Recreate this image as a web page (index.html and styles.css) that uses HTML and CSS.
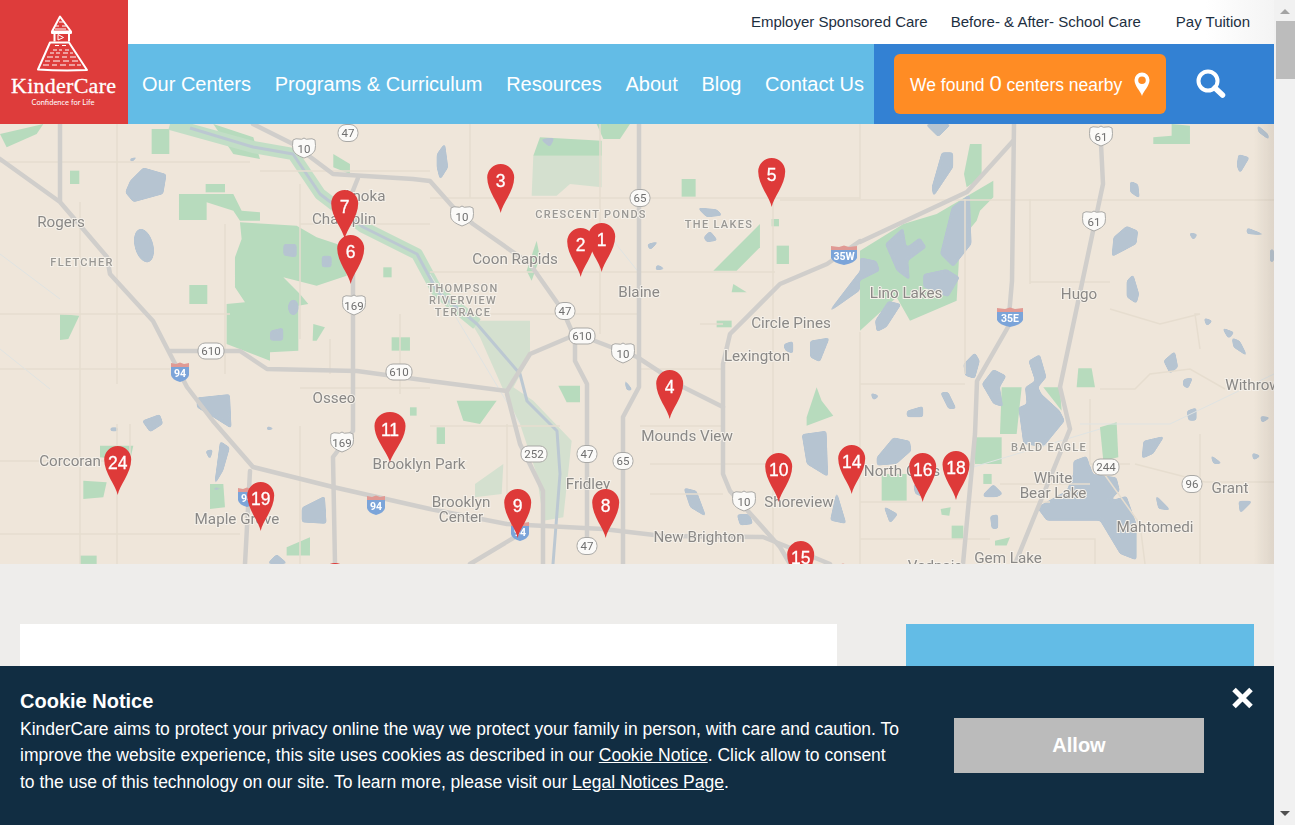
FILE: index.html
```html
<!DOCTYPE html>
<html lang="en">

<head>
    <meta charset="UTF-8">
    <meta name="viewport" content="width=device-width, initial-scale=1.0">
    <title>KinderCare Centers</title>
    <link rel="stylesheet" href="styles.css">
</head>

<body>
    <div class="page">
        <header class="site-header">
            <a class="logo" href="#">
                <svg width="128" height="124" viewBox="0 0 128 124">
                    <g class="logo-lines">
                        <path d="M60 16.500 L52 31.500 L71 31.500 Z" />
                        <path d="M52 31.500 V33 H71 V31.500 M54.500 33 V41.500 M69 33 V41.500" />
                        <path d="M50 42.500 H69 L87 70 Q62 71 38 69.500 Z" />
                        <path class="logo-thin" d="M56 26 H59 M62 26 H66 M59 22 H63 M55 29 H66 M55 45.500 H59 M62 45.500 H66 M53 50 H57 M59 50 H62 M65 50 H69 M50 53 H54 M56 53 H60 M63 53 H68 M70 53 H73 M47 57 H53 M55 57 H59 M62 57 H67 M70 57 H76 M45 61 H50 M53 61 H60 M63 61 H69 M72 61 H78 M43 65 H49 M52 65 H57 M60 65 H66 M69 65 H75 M77 65 H81" />
                        <path class="logo-thin" d="M58 34.500 V40 L63.500 37.500 Z" />
                    </g>
                    <text class="logo-name" x="63.500" y="93" textLength="105">KinderCare</text>
                    <text class="logo-tag" x="63" y="104.500" textLength="63">Confidence for Life</text>
                </svg>
            </a>
            <div class="header-main">
                <div class="top-links">
                    <a href="#">Employer Sponsored Care</a>
                    <a href="#">Before- &amp; After- School Care</a>
                    <a class="pay-link" href="#">Pay Tuition</a>
                </div>
                <div class="nav-row">
                    <nav class="main-nav">
                        <a href="#">Our Centers</a>
                        <a href="#">Programs &amp; Curriculum</a>
                        <a href="#">Resources</a>
                        <a href="#">About</a>
                        <a href="#">Blog</a>
                        <a href="#">Contact Us</a>
                    </nav>
                    <div class="nav-tools">
                        <a class="found-btn" href="#">
                            <span>We found <b>0</b> centers nearby</span>
                            <svg width="16" height="24" viewBox="0 0 16 24">
                                <path fill="#fff" fill-rule="evenodd" d="M8 24 C6.500 19 0.500 14 0.500 8 A7.500 7.500 0 0 1 15.500 8 C15.500 14 9.500 19 8 24 Z M8 4.500 A3.800 3.800 0 1 0 8 12.100 A3.800 3.800 0 0 0 8 4.500 Z" />
                            </svg>
                        </a>
                        <a class="search-btn" href="#">
                            <svg width="30" height="30" viewBox="0 0 30 30">
                                <circle cx="12" cy="12" r="9.500" fill="none" stroke="#fff" stroke-width="4" />
                                <path d="M19 19 L26.500 26" stroke="#fff" stroke-width="5.500" stroke-linecap="round" />
                            </svg>
                        </a>
                    </div>
                </div>
            </div>
        </header>

        <div class="map">
            <svg width="1274" height="440" viewBox="0 0 1274 440">
                <defs>
                    <path id="pin" d="M0 0 C-1.500 -9 -13.500 -22 -13.500 -35.500 A13.500 13.500 0 1 1 13.500 -35.500 C13.500 -22 1.500 -9 0 0 Z" />
                    <rect id="route2" x="-10" y="-8.500" width="20" height="17" rx="8" />
                    <rect id="route3" x="-13" y="-8" width="26" height="16" rx="7" />
                    <path id="us" d="M-11 -8 Q-8 -10 -5 -9 Q-2 -8 0 -10 Q2 -8 5 -9 Q8 -10 11 -8 Q12 -2 11 2 Q9 7 0 10 Q-9 7 -11 2 Q-12 -2 -11 -8 Z" />
                    <filter id="soft" x="-5%" y="-5%" width="110%" height="110%">
                        <feGaussianBlur stdDeviation="4" />
                        <feComponentTransfer>
                            <feFuncA type="linear" slope="6" intercept="-2.500" />
                        </feComponentTransfer>
                    </filter>
                </defs>

                <g class="map-base">
                    <g class="parks-pale" transform="translate(430) scale(.3333)">
                        <polygon points="120,590 300,590 300,700 250,790 310,830 425,950 400,1180 340,1190 320,1050 270,900 230,820 150,640" />
                        <polygon points="310,95 515,95 515,190 420,180 380,215 305,215" />
                        <polygon points="135,1080 220,1020 215,1110 135,1120" />
                    </g>
                    <g class="parks" transform="scale(.3333)">
                        <polygon points="720,295 890,305 950,340 1040,370 1040,455 950,485 850,460 900,510 925,540 895,545 895,680 810,685 810,710 680,660 680,540 735,535 705,490 705,400 725,345" />
                        <polygon points="537,210 700,210 725,260 780,265 780,290 720,290 700,260 620,235 620,288 537,288" />
                        <polygon points="617,180 675,180 675,205 617,205" />
                        <polygon points="455,15 508,15 508,90 455,90" />
                        <polygon points="568,483 622,483 622,540 568,540" />
                        <polygon points="210,140 238,140 238,180 210,180" />
                        <polygon points="180,570 238,575 205,645 180,648" />
                        <polygon points="940,600 975,610 950,650 938,650" />
                        <polygon points="1175,640 1230,640 1230,680 1175,680" />
                        <polygon points="1150,430 1175,430 1175,460 1150,460" />
                        <polygon points="250,1070 320,1075 310,1120 250,1125" />
                        <polygon points="300,965 400,965 390,1010 300,1000" />
                        <polygon points="630,1080 670,1080 675,1150 630,1155" />
                        <polygon points="240,1295 290,1295 290,1320 240,1320" />
                        <polygon points="1230,850 1250,850 1250,875 1230,875" />
                        <polygon points="0,30 130,0 110,30 20,70" />
                        <polygon points="640,0 760,40 780,105 700,90" />
                        <polygon points="1000,90 1050,120 1050,150 1000,130" />
                        <polygon points="860,1270 930,1240 930,1295 860,1295" />
                    </g>
                    <g class="parks" transform="translate(430) scale(.3333)">
                        <polygon points="330,40 515,50 515,95 310,95" />
                        <polygon points="755,165 797,165 797,218 755,218" />
                        <polygon points="1040,365 1077,365 1077,420 1040,420" />
                        <polygon points="1025,285 1047,285 1047,307 1025,307" />
                        <polygon points="850,440 990,300 990,370 920,440" />
                        <polygon points="1130,880 1160,790 1175,830 1210,875 1130,905" />
                        <polygon points="385,785 450,785 450,835 410,835" />
                        <polygon points="20,910 45,910 45,960 20,960" />
                        <polygon points="80,830 200,830 150,900 100,890" />
                        <polygon points="500,0 600,0 570,45 520,45" />
                        <polygon points="860,590 905,590 905,610 860,610" />
                        <polygon points="910,480 950,505 905,505" />
                        <polygon points="290,440 320,350 330,400 305,470" />
                    </g>
                    <g class="parks" transform="translate(860) scale(.3333)">
                        <polygon points="330,60 365,60 365,160 320,190 312,150" />
                        <polygon points="880,40 935,35 935,0 990,5 990,60 880,60" />
                        <polygon points="0,380 130,300 230,270 400,170 400,220 360,260 350,290 300,350 290,530 150,590 110,520 0,620" />
                        <polygon points="345,940 425,940 425,1020 345,1020" />
                        <polygon points="655,733 695,733 705,790 650,790" />
                        <polygon points="425,790 485,790 470,930 420,930" />
                        <polygon points="550,790 600,790 605,860" />
                        <polygon points="720,910 770,895 775,1000 730,1010" />
                        <polygon points="65,1050 140,1050 140,1130 65,1130" />
                        <polygon points="275,1205 310,1205 310,1245 275,1245" />
                        <polygon points="242,1155 272,1150 268,1175 245,1172" />
                        <polygon points="405,1250 450,1240 440,1265 405,1265" />
                        <polygon points="370,1050 395,1050 395,1080 370,1080" />
                    </g>

                    <g filter="url(#soft)" transform="scale(.3333)">
                        <g class="lakes">
                            <polygon points="390,170 430,130 500,150 490,210 400,235 375,205" />
                            <ellipse cx="432" cy="365" rx="28" ry="52" transform="rotate(-15 432 365)" />
                            <polygon points="590,820 690,810 695,915 640,880 590,850" />
                            <polygon points="425,890 480,870 490,900 450,925" />
                            <polygon points="905,1150 975,1115 980,1200 905,1195" />
                            <polygon points="800,1320 830,1290 865,1320" />
                            <polygon points="660,950 690,970 670,1040 640,1090 690,1090 640,1100" />
                            <polygon points="850,360 890,360 890,400 850,395" />
                            <polygon points="810,620 850,610 850,650 810,650" />
                            <ellipse cx="880" cy="550" rx="16" ry="24" />
                            <polygon points="965,395 995,395 995,430 965,430" />
                            <polygon points="385,105 420,95 395,115" />
                            <polygon points="615,980 640,975 630,1010" />
                            <polygon points="330,910 355,910 355,922 330,922" />
                            <polygon points="800,905 830,915 800,920" />
                        </g>
                        <g class="lakes" transform="translate(1290)">
                            <polygon points="20,90 45,55 55,130 30,170 20,130" />
                            <polygon points="1115,930 1190,920 1195,1060 1130,1020" />
                            <polygon points="1140,650 1200,640 1170,715 1140,700" />
                            <polygon points="1290,500 1190,570 1290,440" />
                            <polygon points="580,760 610,800 590,800" />
                            <polygon points="330,45 375,40 360,70" />
                            <polygon points="650,360 690,350 660,380" />
                            <polygon points="820,340 840,320 865,350 830,355" />
                            <polygon points="800,250 860,255 880,275 830,280" />
                            <polygon points="680,420 710,435 675,440" />
                            <polygon points="1060,660 1090,650 1090,690 1065,680" />
                            <polygon points="1220,1100 1250,1200 1200,1190" />
                            <polygon points="760,1090 800,1100 830,1180 780,1150" />
                            <polygon points="920,1170 960,1170 970,1200 930,1205" />
                        </g>
                        <g class="lakes" transform="translate(2580)">
                            <polygon points="75,360 130,310 140,370 180,340 200,370 145,410 150,470 110,440" />
                            <polygon points="0,400 50,410 60,440 0,470" />
                            <polygon points="190,450 260,435 300,460 265,520 190,490" />
                            <polygon points="275,250 330,210 335,360 280,430 240,390" />
                            <polygon points="245,85 280,85 280,130 220,220 215,190" />
                            <polygon points="195,0 275,0 235,40" />
                            <polygon points="45,590 85,530 125,540 80,610 50,625" />
                            <polygon points="755,400 760,340 800,305 835,320 830,360" />
                            <polygon points="800,470 820,450 838,510 830,540 800,520" />
                            <polygon points="310,720 345,685 360,710 345,765 315,755" />
                            <polygon points="365,780 400,735 440,755 420,790 430,850 400,840" />
                            <polygon points="505,710 540,690 560,760 535,790 545,810 600,860 615,890 550,970 490,960 475,850 500,840 495,790 525,770" />
                            <polygon points="640,1010 680,995 700,1050 770,1060 780,1100 750,1130 800,1115 830,1200 830,1310 780,1290 720,1190 560,1190 530,1150 620,1100 640,1050" />
                            <polygon points="50,1000 100,940 150,950 155,980 110,1020 50,1025" />
                            <polygon points="910,710 945,680 955,730 930,750" />
                            <polygon points="850,950 915,935 880,990 845,1005" />
                            <polygon points="980,860 1010,850 1010,890 985,890" />
                            <polygon points="160,1080 210,1080 190,1120 165,1110" />
                            <polygon points="240,805 265,803 290,855 265,855" />
                            <polygon points="140,860 190,845 190,880 140,880" />
                            <polygon points="370,1110 400,1080 430,1110 410,1120 370,1120" />
                            <polygon points="390,1175 415,1170 415,1215 395,1215" />
                            <polygon points="1160,310 1225,335 1160,330" />
                            <polygon points="1115,640 1140,650 1165,700 1120,670" />
                            <polygon points="1085,610 1125,625 1105,645" />
                            <polygon points="1030,580 1060,590 1040,608" />
                            <polygon points="985,325 1015,330 1000,350" />
                            <polygon points="810,170 835,180 840,225 810,205" />
                            <polygon points="1135,90 1170,100 1140,150 1130,125" />
                            <polygon points="1190,0 1225,30 1230,50 1195,25" />
                            <polygon points="970,765 1000,760 985,795 968,785" />
                            <polygon points="1050,990 1090,1020 1060,1020" />
                            <polygon points="885,1110 935,1160 895,1155" />
                            <polygon points="1135,1130 1180,1130 1140,1170" />
                            <polygon points="1200,875 1235,880 1205,898" />
                            <polygon points="1175,985 1205,995 1180,1010" />
                            <polygon points="1230,375 1242,375 1242,415 1230,415" />
                            <polygon points="70,1145 115,1170 90,1200" />
                            <polygon points="30,805 60,815 40,830" />
                        </g>
                    </g>

                    <path class="river-green" d="M170 0 L253 23 L293 30 L320 70 L363 103 L417 130 L437 167 L477 200" />
                    <path class="river-blue" d="M190 4 L253 23 L293 30 L320 70 L363 103 L417 130 L437 167 L477 200 L520 250 L527 277 L557 307 L560 350 L553 440" />

                    <path class="road-minor" d="M0 38 H250 M0 190 H230 M0 245 H170 M0 337 H130 V300 M0 410 H240 M117 0 V260 M80 78 V440 M117 300 V440 M225 100 V250 M260 47 H430 M300 100 H430 M300 60 V215 M300 264 H430 M300 302 V440 M330 215 V250 M430 74 H860 M470 0 V74 M430 148 H640 M480 190 H640 M400 190 V270 M430 302 H560 M507 300 V370 M600 0 V210 M640 148 H775 M700 200 H723 M640 245 H723 M640 302 H723 M650 340 H780 M650 370 H723 M780 76 H1274 M773 75 V440 M860 0 V75 M860 208 V440 M860 260 H965 M965 75 V250 M1030 75 V160 M1030 158 H1110 M1110 185 L1160 200 L1200 190 H1195 L1200 225 M1100 265 H1135 L1150 250 L1190 245 L1225 265 M1090 275 V340 H1130 M1200 310 V440 M1135 340 L1205 358 H1274 M860 378 H1050 M860 415 H990 M1040 415 H1095 V440 M1000 360 H1090 M1097 340 L1140 400 L1145 440" />
                    <path class="road-thin" d="M0 130 L60 175 M600 100 L640 150 M0 225 L50 265 M1080 300 L1170 300 L1274 250 M950 350 L1100 305 M430 150 L520 300" />

                    <g class="roads">
                        <path d="M0 35 L60 78 L107 133 L110 150 L153 197 L170 230 L187 263 L213 297 L253 343 L333 363 L430 385 L507 400 L603 405 L663 412 L763 413 L813 433 L830 440" />
                        <path d="M253 0 L293 20 L333 50 L413 55 L430 57 L453 83 L473 100 L530 140 L563 187 L573 210 L582 212 L637 233 L683 263 L723 283" />
                        <path d="M170 227 L240 227 L267 245 L357 247 L430 257 L507 267 L530 230 L570 213" />
                        <path d="M353 150 L353 247 L353 307 L333 333 L335 440" />
                        <path d="M358 54 L350 74" />
                        <path d="M639 0 V263 L623 293 V440" />
                        <path d="M860 117 L827 140 L780 160 L730 210 L723 240 V350 L730 367 L780 423 L790 440" />
                        <path d="M860 118 L967 68 L1013 17" />
                        <path d="M1014 0 L1012 157 L1008 203 L977 257 L975 310 L963 440" />
                        <path d="M1101 20 L1103 60 L1060 263 L1070 305 L1015 440" />
                        <path d="M575 217 V237 L587 260 V417" />
                        <path d="M507 270 L520 320 L543 367 V440" />
                        <path d="M60 0 V77" />
                        <path d="M250 347 L245 440" />
                        <path d="M470 440 L520 410" />
                    </g>
                </g>

                <g class="shields">
                    <g transform="translate(348 9)"><use class="route" href="#route2" /><text y="4">47</text></g>
                    <g transform="translate(304 24)"><use class="route" href="#us" /><text y="4.500">10</text></g>
                    <g transform="translate(354 181)"><use class="route" href="#us" /><text y="4.500">169</text></g>
                    <g transform="translate(211 227)"><use class="route" href="#route3" /><text y="4">610</text></g>
                    <g transform="translate(399 248)"><use class="route" href="#route3" /><text y="4">610</text></g>
                    <g transform="translate(342 318)"><use class="route" href="#us" /><text y="4.500">169</text></g>
                    <g transform="translate(640 74)"><use class="route" href="#route2" /><text y="4">65</text></g>
                    <g transform="translate(462 92)"><use class="route" href="#us" /><text y="4.500">10</text></g>
                    <g transform="translate(565 187)"><use class="route" href="#route2" /><text y="4">47</text></g>
                    <g transform="translate(582 212)"><use class="route" href="#route3" /><text y="4">610</text></g>
                    <g transform="translate(623 229)"><use class="route" href="#us" /><text y="4.500">10</text></g>
                    <g transform="translate(534 330)"><use class="route" href="#route3" /><text y="4">252</text></g>
                    <g transform="translate(587 330)"><use class="route" href="#route2" /><text y="4">47</text></g>
                    <g transform="translate(623 337)"><use class="route" href="#route2" /><text y="4">65</text></g>
                    <g transform="translate(744 377)"><use class="route" href="#us" /><text y="4.500">10</text></g>
                    <g transform="translate(587 422)"><use class="route" href="#route2" /><text y="4">47</text></g>
                    <g transform="translate(1101 12)"><use class="route" href="#us" /><text y="4.500">61</text></g>
                    <g transform="translate(1094 97)"><use class="route" href="#us" /><text y="4.500">61</text></g>
                    <g transform="translate(1106 343)"><use class="route" href="#route3" /><text y="4">244</text></g>
                    <g transform="translate(1192 360)"><use class="route" href="#route2" /><text y="4">96</text></g>

                    <g class="interstate" transform="translate(180 248)"><path class="i-blue" d="M-9 -5 H9 V3 Q8 8 0 10 Q-8 8 -9 3 Z" /><path class="i-red" d="M-9 -5 V-9 L-4 -8 L0 -9.500 L4 -8 L9 -9 V-5 Z" /><text y="4.500">94</text></g>
                    <g class="interstate" transform="translate(376 381)"><path class="i-blue" d="M-9 -5 H9 V3 Q8 8 0 10 Q-8 8 -9 3 Z" /><path class="i-red" d="M-9 -5 V-9 L-4 -8 L0 -9.500 L4 -8 L9 -9 V-5 Z" /><text y="4.500">94</text></g>
                    <g class="interstate" transform="translate(247 373)"><path class="i-blue" d="M-9 -5 H9 V3 Q8 8 0 10 Q-8 8 -9 3 Z" /><path class="i-red" d="M-9 -5 V-9 L-4 -8 L0 -9.500 L4 -8 L9 -9 V-5 Z" /><text y="4.500">94</text></g>
                    <g class="interstate" transform="translate(520 407)"><path class="i-blue" d="M-9 -5 H9 V3 Q8 8 0 10 Q-8 8 -9 3 Z" /><path class="i-red" d="M-9 -5 V-9 L-4 -8 L0 -9.500 L4 -8 L9 -9 V-5 Z" /><text y="4.500">94</text></g>
                    <g class="interstate" transform="translate(844 131)"><path class="i-blue" d="M-13 -5 H13 V3 Q11 8 0 10 Q-11 8 -13 3 Z" /><path class="i-red" d="M-13 -5 V-9 L-5 -8 L0 -9.500 L5 -8 L13 -9 V-5 Z" /><text y="4.500">35W</text></g>
                    <g class="interstate" transform="translate(1010 193)"><path class="i-blue" d="M-13 -5 H13 V3 Q11 8 0 10 Q-11 8 -13 3 Z" /><path class="i-red" d="M-13 -5 V-9 L-5 -8 L0 -9.500 L5 -8 L13 -9 V-5 Z" /><text y="4.500">35E</text></g>
                    <g class="interstate" transform="translate(843 449)"><path class="i-blue" d="M-13 -5 H13 V3 Q11 8 0 10 Q-11 8 -13 3 Z" /><path class="i-red" d="M-13 -5 V-9 L-5 -8 L0 -9.500 L5 -8 L13 -9 V-5 Z" /></g>
                </g>

                <g class="places">
                    <text x="61" y="103">Rogers</text>
                    <text x="364" y="77">Anoka</text>
                    <text x="344" y="100">Champlin</text>
                    <text x="334" y="279">Osseo</text>
                    <text x="70" y="342">Corcoran</text>
                    <text x="419" y="345">Brooklyn Park</text>
                    <text x="237" y="400">Maple Grove</text>
                    <text x="515" y="140">Coon Rapids</text>
                    <text x="639" y="173">Blaine</text>
                    <text x="791" y="204">Circle Pines</text>
                    <text x="757" y="237">Lexington</text>
                    <text x="687" y="317">Mounds View</text>
                    <text x="588" y="365">Fridley</text>
                    <text x="461" y="383">Brooklyn</text>
                    <text x="461" y="398">Center</text>
                    <text x="699" y="418">New Brighton</text>
                    <text x="799" y="383">Shoreview</text>
                    <text x="906" y="174">Lino Lakes</text>
                    <text x="1079" y="175">Hugo</text>
                    <text x="902" y="352">North Oaks</text>
                    <text x="1053" y="359">White</text>
                    <text x="1053" y="374">Bear Lake</text>
                    <text x="1155" y="408">Mahtomedi</text>
                    <text x="1230" y="369">Grant</text>
                    <text x="1253" y="266">Withrow</text>
                    <text x="1008" y="439">Gem Lake</text>
                    <text x="935" y="447">Vadnais</text>
                </g>
                <g class="hoods">
                    <text x="82" y="142">FLETCHER</text>
                    <text x="591" y="94">CRESCENT PONDS</text>
                    <text x="719" y="104">THE LAKES</text>
                    <text x="463" y="168">THOMPSON</text>
                    <text x="463" y="180">RIVERVIEW</text>
                    <text x="463" y="192">TERRACE</text>
                    <text x="1049" y="327">BALD EAGLE</text>
                </g>

                <g class="pins">
                    <g transform="translate(335 488)"><use href="#pin" /></g>
                    <g transform="translate(723 489)"><use href="#pin" /></g>
                    <g transform="translate(1029 489)"><use href="#pin" /></g>
                    <g transform="translate(601.700 148)"><use href="#pin" /><text y="-26">1</text></g>
                    <g transform="translate(580.700 153)"><use href="#pin" /><text y="-26">2</text></g>
                    <g transform="translate(500.700 89)"><use href="#pin" /><text y="-26">3</text></g>
                    <g transform="translate(669.700 295)"><use href="#pin" /><text y="-26">4</text></g>
                    <g transform="translate(771.700 83)"><use href="#pin" /><text y="-26">5</text></g>
                    <g transform="translate(344.700 115)"><use href="#pin" /><text y="-26">7</text></g>
                    <g transform="translate(350.700 160)"><use href="#pin" /><text y="-26">6</text></g>
                    <g transform="translate(605.700 414)"><use href="#pin" /><text y="-26">8</text></g>
                    <g transform="translate(517.700 414)"><use href="#pin" /><text y="-26">9</text></g>
                    <g transform="translate(778.700 378)"><use href="#pin" /><text y="-26">10</text></g>
                    <g transform="translate(390 338.500)"><use href="#pin" transform="scale(1.150 1.030)" /><text y="-27">11</text></g>
                    <g transform="translate(851.700 370)"><use href="#pin" /><text y="-26">14</text></g>
                    <g transform="translate(800.700 466)"><use href="#pin" /><text y="-26">15</text></g>
                    <g transform="translate(922.700 378)"><use href="#pin" /><text y="-26">16</text></g>
                    <g transform="translate(956 376)"><use href="#pin" /><text y="-26">18</text></g>
                    <g transform="translate(260.700 407)"><use href="#pin" /><text y="-26">19</text></g>
                    <g transform="translate(117.700 371)"><use href="#pin" /><text y="-26">24</text></g>
                </g>
            </svg>
        </div>

        <main class="content">
            <section class="center-list"></section>
            <aside class="side-panel"></aside>
        </main>

        <div class="cookie-bar">
            <div class="cookie-text">
                <h2>Cookie Notice</h2>
                <p>KinderCare aims to protect your privacy online the way we protect your family in person, with care and caution. To improve the website experience, this site uses cookies as described in our <a href="#">Cookie Notice</a>. Click allow to consent to the use of this technology on our site. To learn more, please visit our <a href="#">Legal Notices Page</a>.</p>
            </div>
            <button class="allow-btn" type="button">Allow</button>
            <button class="close-btn" type="button" aria-label="Close">
                <svg width="23" height="22" viewBox="0 0 23 22">
                    <path d="M3 2.500 L20 19.500 M20 2.500 L3 19.500" stroke="#fff" stroke-width="5" />
                </svg>
            </button>
        </div>
    </div>

    <div class="scrollbar">
        <span class="arrow-up"></span>
        <span class="thumb"></span>
        <span class="arrow-down"></span>
    </div>
</body>
</html>
```

FILE: styles.css
```css
html,
body {
    height: 100%;
    margin: 0;
    overflow: hidden;
}

body {
    display: flex;
    font-family: 'Liberation Sans', Arial, sans-serif;
    background-color: #eeedeb;
}

a {
    color: inherit;
    text-decoration: none;
}

.page {
    position: relative;
    width: 1274px;
    height: 825px;
    overflow: hidden;
    flex: none;
}

/* header */
.site-header {
    display: flex;
    height: 124px;
}

.logo {
    display: block;
    width: 128px;
    height: 124px;
    flex: none;
    background-color: #de3c3b;
}

.logo svg {
    display: block;
}

.logo-lines path {
    fill: none;
    stroke: #fff;
    stroke-width: 2;
    stroke-linejoin: round;
}

.logo-lines .logo-thin {
    stroke-width: 1;
}

.logo-name {
    fill: #fff;
    stroke: #fff;
    stroke-width: 0.300px;
    font-family: 'Liberation Serif', serif;
    font-size: 22px;
    text-anchor: middle;
}

.logo-tag {
    fill: #fff;
    font-family: Lato, sans-serif;
    font-size: 7.500px;
    text-anchor: middle;
}

.header-main {
    flex: 1;
    display: flex;
    flex-direction: column;
}

.top-links {
    height: 42px;
    padding: 0 24px 2px 0;
    display: flex;
    align-items: center;
    justify-content: flex-end;
    gap: 23px;
    font-size: 15px;
    color: #1d2f3f;
    background: linear-gradient(to right, #fff 94%, #f4f4f4 100%);
}

.pay-link {
    margin-left: 12px;
}

.nav-row {
    height: 80px;
    display: flex;
}

.main-nav {
    flex: 1;
    display: flex;
    align-items: center;
    gap: 23.700px;
    padding-left: 14px;
    font-size: 20px;
    color: #fff;
    background-color: #63bce6;
}

.nav-tools {
    width: 400px;
    flex: none;
    display: flex;
    align-items: center;
    padding-left: 20px;
    box-sizing: border-box;
    background-color: #3381d3;
}

.found-btn {
    width: 272px;
    height: 60px;
    display: flex;
    align-items: center;
    gap: 12px;
    padding-left: 16px;
    box-sizing: border-box;
    border-radius: 6px;
    font-size: 17.500px;
    color: #fff;
    background-color: #ff8c24;
}

.found-btn b {
    font-size: 22px;
    font-weight: normal;
}

.search-btn {
    display: flex;
    margin-left: 30px;
}

/* map */
.map {
    position: relative;
    height: 440px;
    overflow: hidden;
    background-color: #efe6da;
}

.map svg {
    display: block;
}

.map::after {
    content: "";
    position: absolute;
    top: 0;
    right: 0;
    bottom: 0;
    width: 20px;
    background: linear-gradient(to right, rgba(120, 110, 100, 0), rgba(120, 110, 100, 0.14));
}

.map-base {
    filter: blur(0.6px);
}

.parks {
    fill: #b7dbbd;
}

.parks-pale {
    fill: #d4e0cf;
}

.lakes {
    fill: #b6c4d1;
}

.river-green {
    fill: none;
    stroke: #c2dec6;
    stroke-width: 12;
    stroke-linejoin: round;
}

.river-blue {
    fill: none;
    stroke: #bcc8d2;
    stroke-width: 3;
    stroke-linejoin: round;
}

.road-minor {
    fill: none;
    stroke: #e6ddcf;
    stroke-width: 1.500;
}

.road-thin {
    fill: none;
    stroke: #dfe3e2;
    stroke-width: 1;
}

.roads path {
    fill: none;
    stroke: #d0cecb;
    stroke-width: 4.500;
    stroke-linejoin: round;
    stroke-linecap: round;
}

.shields text {
    font-family: Roboto, sans-serif;
    font-size: 11.500px;
    text-anchor: middle;
    fill: #6f6f6f;
}

.route {
    fill: #fbfaf8;
    stroke: #a9a8a5;
    stroke-width: 1;
}

.i-blue {
    fill: #7ba4d9;
}

.i-red {
    fill: #e09a94;
}

.shields .interstate text {
    font-weight: bold;
    font-size: 10.500px;
    fill: #fff;
}

.places text {
    font-family: Roboto, sans-serif;
    font-size: 15.200px;
    text-anchor: middle;
    fill: #8a8886;
    stroke: #f5f1ea;
    stroke-width: 2px;
    paint-order: stroke;
}

.hoods text {
    font-family: Roboto, sans-serif;
    font-size: 11px;
    font-weight: 500;
    letter-spacing: 1.300px;
    text-anchor: middle;
    fill: #9a9894;
    stroke: #f5f1ea;
    stroke-width: 2px;
    paint-order: stroke;
}

.pins use {
    fill: #de3a39;
}

.pins text {
    font-size: 17.500px;
    text-anchor: middle;
    fill: #fff;
    stroke: #fff;
    stroke-width: 0.300px;
}

/* content under the map */
.content {
    display: flex;
    justify-content: space-between;
    padding: 60px 20px;
}

.center-list {
    width: 817px;
    height: 400px;
    background-color: #fff;
}

.side-panel {
    width: 348px;
    height: 400px;
    background-color: #63bce6;
}

/* cookie notice */
.cookie-bar {
    position: absolute;
    left: 0;
    right: 0;
    bottom: 0;
    height: 159px;
    display: flex;
    align-items: flex-start;
    padding: 20px 0 0 20px;
    box-sizing: border-box;
    color: #fff;
    background-color: #112d42;
}

.cookie-text {
    width: 880px;
    flex: none;
}

.cookie-text h2 {
    margin: 0;
    font-size: 20px;
    line-height: 30px;
}

.cookie-text p {
    margin: 0;
    font-size: 17.500px;
    line-height: 26.300px;
}

.cookie-text a {
    text-decoration: underline;
}

.allow-btn {
    width: 250px;
    height: 55px;
    margin: 32px 0 0 54px;
    border: none;
    font-family: inherit;
    font-size: 20px;
    font-weight: bold;
    color: #fff;
    background-color: #bbb;
    cursor: pointer;
}

.close-btn {
    position: absolute;
    top: 21px;
    right: 20px;
    display: flex;
    padding: 0;
    border: none;
    background: none;
    cursor: pointer;
}

/* window scrollbar */
.scrollbar {
    position: relative;
    flex: 1;
    background-color: #f1f1f1;
}

.thumb {
    display: block;
    width: 19px;
    height: 58px;
    margin: 21px 0 0 2px;
    background-color: #bcbcbc;
}

.arrow-up,
.arrow-down {
    position: absolute;
    left: 6px;
    width: 0;
    height: 0;
    border-left: 5px solid transparent;
    border-right: 5px solid transparent;
}

.arrow-up {
    top: 9px;
    border-bottom: 5px solid #a3a3a3;
}

.arrow-down {
    bottom: 9px;
    border-top: 5px solid #505050;
}
```
